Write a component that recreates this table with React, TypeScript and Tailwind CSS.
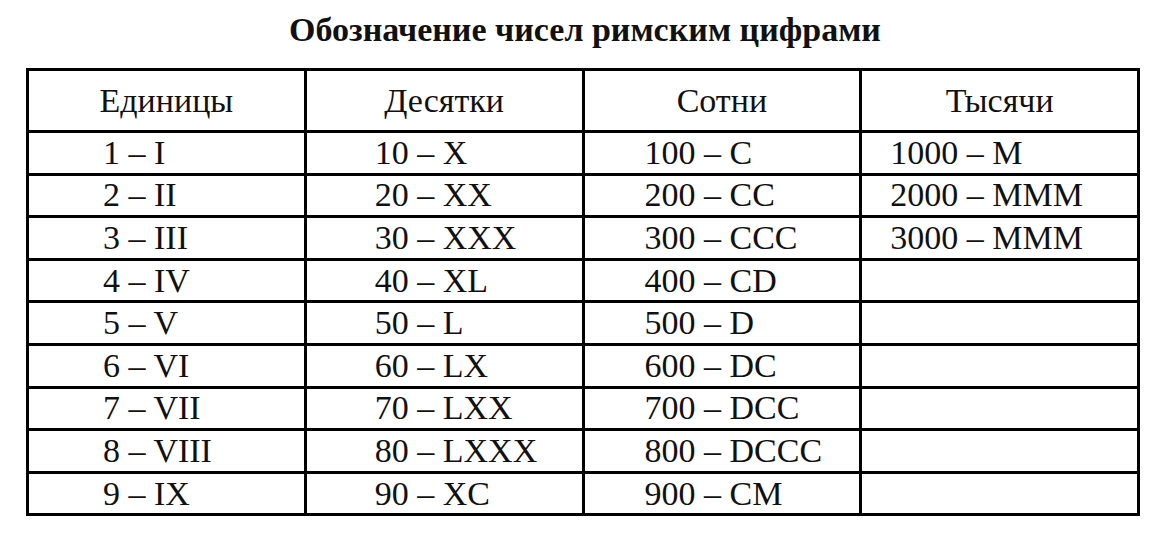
import React from 'react';

const rows: [string, string, string, string][] = [
  ['1 – I', '10 – X', '100 – C', '1000 – M'],
  ['2 – II', '20 – XX', '200 – CC', '2000 – MMM'],
  ['3 – III', '30 – XXX', '300 – CCC', '3000 – MMM'],
  ['4 – IV', '40 – XL', '400 – CD', ''],
  ['5 – V', '50 – L', '500 – D', ''],
  ['6 – VI', '60 – LX', '600 – DC', ''],
  ['7 – VII', '70 – LXX', '700 – DCC', ''],
  ['8 – VIII', '80 – LXXX', '800 – DCCC', ''],
  ['9 – IX', '90 – XC', '900 – CM', ''],
];

const headers = ['Единицы', 'Десятки', 'Сотни', 'Тысячи'];

// left padding of each column, the scan is not centred in the body rows
const pads = ['pl-[74px]', 'pl-[68px]', 'pl-[60px]', 'pl-[28px]'];

export default function App() {
  return (
    <div className="w-[1156px] h-[533px] bg-white text-[#111] font-['Liberation_Serif','Times_New_Roman',serif]">
      {/* Title */}
      <div className="h-[68px] flex items-center justify-center pl-[14px] pb-[10px]">
        <h1 className="text-[34px] font-bold">Обозначение чисел римским цифрами</h1>
      </div>

      {/* Table */}
      <table className="ml-[26px] w-[1114px] table-fixed border-collapse border-[3px] border-black text-[34px] leading-none">
        <thead>
          <tr className="h-[62px]">
            {headers.map((h) => (
              <th key={h} className="border-[3px] border-black font-normal text-center">
                {h}
              </th>
            ))}
          </tr>
        </thead>
        <tbody>
          {rows.map((r, i) => (
            <tr key={i} className="h-[42.6px]">
              {r.map((c, j) => (
                <td key={j} className={`border-[3px] border-black text-left whitespace-nowrap ${pads[j]}`}>
                  {c}
                </td>
              ))}
            </tr>
          ))}
        </tbody>
      </table>
    </div>
  );
}
